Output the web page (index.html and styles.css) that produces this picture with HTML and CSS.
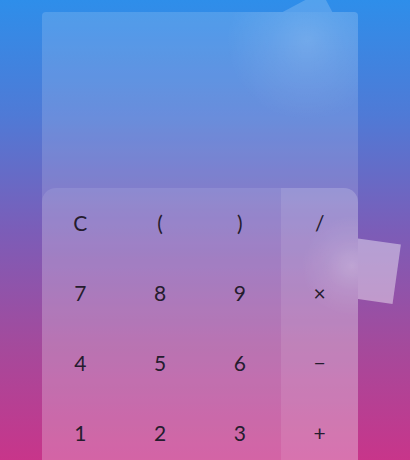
FILE: index.html
```html
<!DOCTYPE html>
<html>
<head>
<meta charset="utf-8">
<link rel="stylesheet" href="styles.css">
</head>
<body>
<div class="stage">
  <div class="peek peek-top"><div class="shape shape-top"></div></div>
  <div class="peek peek-side"><div class="shape shape-side"></div></div>
  <div class="calc">
    <div class="display"></div>
    <div class="keys">
      <button class="key">C</button>
      <button class="key">(</button>
      <button class="key">)</button>
      <button class="key op">/</button>
      <button class="key">7</button>
      <button class="key">8</button>
      <button class="key">9</button>
      <button class="key op">×</button>
      <button class="key">4</button>
      <button class="key">5</button>
      <button class="key">6</button>
      <button class="key op">−</button>
      <button class="key">1</button>
      <button class="key">2</button>
      <button class="key">3</button>
      <button class="key op">+</button>
    </div>
  </div>
</div>
</body>
</html>
```

FILE: styles.css
```css
html, body {
  margin: 0;
  padding: 0;
}

body {
  width: 410px;
  height: 460px;
  overflow: hidden;
  background: linear-gradient(180deg, #2e8eea 0%, #4f7ad6 25%, #7b5db8 50%, #a44a9c 75%, #c8358a 100%);
  font-family: Lato, "Open Sans", sans-serif;
}

.stage {
  position: relative;
  height: 460px;
  padding: 12px 52px 0 42px;
  box-sizing: border-box;
}

.peek {
  position: absolute;
  overflow: hidden;
}

.peek-top {
  left: 0;
  top: 0;
  width: 410px;
  height: 12px;
}

.peek-side {
  left: 358px;
  top: 0;
  width: 52px;
  height: 460px;
}

.shape {
  position: absolute;
  width: 60px;
  height: 60px;
}

.shape-top {
  left: 279px;
  top: 2px;
  transform: rotate(-28deg);
  background: rgba(255, 255, 255, 0.18);
}

.shape-side {
  left: -21px;
  top: 240px;
  transform: rotate(8deg);
  background: rgba(255, 255, 255, 0.42);
}

.calc {
  position: relative;
  width: 316px;
  height: 460px;
  border-radius: 4px 4px 0 0;
  background:
    radial-gradient(circle at 265px 28px, rgba(255, 255, 255, 0.16) 0, rgba(255, 255, 255, 0.08) 35px, rgba(255, 255, 255, 0) 80px),
    radial-gradient(circle at 310px 254px, rgba(255, 255, 255, 0.22) 0, rgba(255, 255, 255, 0.08) 25px, rgba(255, 255, 255, 0) 50px),
    rgba(255, 255, 255, 0.15);
  display: flex;
  flex-direction: column;
}

.display {
  height: 176px;
}

.keys {
  display: grid;
  grid-template-columns: repeat(4, 1fr);
  grid-auto-rows: 70px;
  column-gap: 3px;
  background: rgba(255, 255, 255, 0.1);
  border-radius: 14px 14px 0 0;
  overflow: hidden;
}

.key {
  border: 0;
  padding: 0;
  margin: 0;
  background: transparent;
  font-family: Lato, "Open Sans", sans-serif;
  font-size: 21px;
  font-weight: 400;
  color: #251c2e;
  display: flex;
  align-items: center;
  justify-content: center;
  padding-bottom: 2px;
}

.key.op {
  background: rgba(255, 255, 255, 0.1);
}
```
